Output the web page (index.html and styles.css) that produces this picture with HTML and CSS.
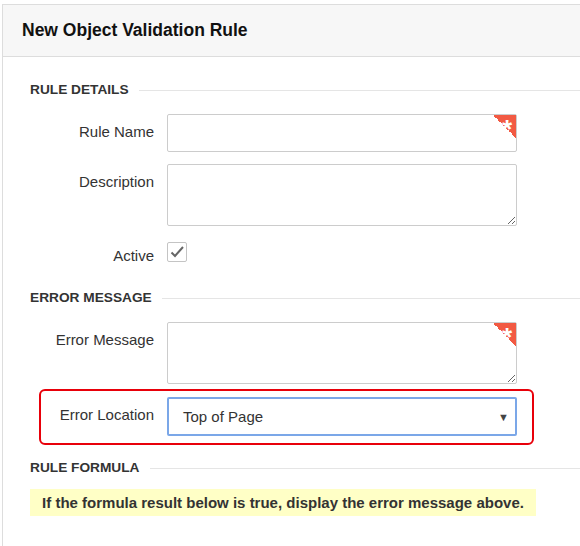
FILE: index.html
```html
<!DOCTYPE html>
<html lang="en">
<head>
    <meta charset="UTF-8">
    <title>New Object Validation Rule</title>
    <link rel="stylesheet" href="styles.css">
</head>
<body>
<div class="panel">
    <div class="panel-head">
        <h1>New Object Validation Rule</h1>
    </div>
    <div class="panel-body">

        <div class="section">
            <span>Rule Details</span>
        </div>
        <div class="row">
            <label class="lbl">Rule Name</label>
            <div class="field required">
                <input type="text" class="input">
            </div>
        </div>
        <div class="row">
            <label class="lbl">Description</label>
            <div class="field">
                <textarea class="input area"></textarea>
            </div>
        </div>
        <div class="row active-row">
            <label class="lbl">Active</label>
            <span class="check">
                <svg width="16" height="16" viewBox="0 0 16 16"><path d="M2.5 8.5 L6 12 L14 3" fill="none" stroke="#666" stroke-width="2"/></svg>
            </span>
        </div>

        <div class="section">
            <span>Error Message</span>
        </div>
        <div class="row">
            <label class="lbl">Error Message</label>
            <div class="field required">
                <textarea class="input area"></textarea>
            </div>
        </div>
        <div class="row row-marked">
            <label class="lbl">Error Location</label>
            <div class="field">
                <div class="select">
                    <span>Top of Page</span>
                    <span class="caret">&#9660;</span>
                </div>
            </div>
        </div>

        <div class="section">
            <span>Rule Formula</span>
        </div>
        <div class="note">If the formula result below is true, display the error message above.</div>
    </div>
</div>
</body>
</html>
```

FILE: styles.css
```css
html, body {
    height: 100%;
}
body {
    margin: 0;
    font-family: "Liberation Sans", Arial, sans-serif;
    color: #333;
    background: #fff;
    overflow: hidden;
}
.panel {
    box-sizing: border-box;
    height: 100%;
    margin: 4px -20px 0 2px;
    border: 1px solid #ddd;
    border-bottom: none;
}
.panel-head {
    height: 51px;
    background: #f7f7f7;
    border-bottom: 1px solid #ddd;
    display: flex;
    align-items: center;
    padding-left: 19px;
}
.panel-head h1 {
    margin: 0;
    font-size: 17.5px;
    color: #111;
}
.panel-body {
    padding-top: 25px;
}
.section {
    display: flex;
    align-items: center;
    margin-left: 27px;
    font-size: 13.7px;
    font-weight: bold;
    text-transform: uppercase;
    line-height: 16px;
}
.section::after {
    content: "";
    flex: 1;
    border-top: 1px solid #e5e5e5;
    margin-left: 10px;
}
.row {
    display: flex;
    align-items: flex-start;
    margin-top: 16px;
}
.row + .row {
    margin-top: 12px;
}
.lbl {
    width: 151px;
    padding-right: 13px;
    padding-top: 8px;
    text-align: right;
    font-size: 15px;
    line-height: 20px;
}
.field {
    position: relative;
    width: 350px;
}
.input {
    display: block;
    box-sizing: border-box;
    width: 350px;
    height: 38px;
    margin: 0;
    border: 1px solid #ccc;
    border-radius: 2px;
    font-family: inherit;
    font-size: 15px;
}
.area {
    height: 62px;
    resize: vertical;
}
/* red corner flag on mandatory fields */
.required::after {
    content: "*";
    position: absolute;
    top: 1px;
    right: 1px;
    width: 23px;
    height: 23px;
    background: linear-gradient(45deg, transparent 50%, #f25a43 50%);
    color: #fff;
    font-weight: bold;
    font-size: 26px;
    line-height: 28px;
    text-align: right;
    padding-right: 4px;
    box-sizing: border-box;
}
.row + .active-row {
    margin-top: 15px;
}
.active-row .lbl {
    padding-top: 5px;
}
.check {
    display: flex;
    align-items: center;
    justify-content: center;
    width: 18px;
    height: 18px;
    margin-top: 1px;
    border: 1px solid #c4c4c4;
    border-radius: 2px;
}
.active-row + .section {
    margin-top: 24px;
}
.row-marked {
    margin-left: 36px;
    width: 491px;
    border: 2px solid #e8000a;
    border-radius: 6px;
    padding: 6px 0 7px;
}
.row + .row-marked {
    margin-top: 5px;
}
.row-marked .lbl {
    width: 113px;
}
.select {
    box-sizing: border-box;
    width: 350px;
    height: 39px;
    border: 2px solid #7ba7e8;
    border-radius: 2px;
    display: flex;
    align-items: center;
    justify-content: space-between;
    padding: 0 6px 0 14px;
    font-size: 15px;
}
.caret {
    font-size: 11px;
    color: #444;
}
.row-marked + .section {
    margin-top: 15px;
}
.section + .note {
    margin-top: 13px;
}
.note {
    margin-left: 27px;
    width: 506px;
    height: 27px;
    line-height: 27px;
    background: #ffffc6;
    text-align: center;
    font-weight: bold;
    font-size: 15px;
}
```
